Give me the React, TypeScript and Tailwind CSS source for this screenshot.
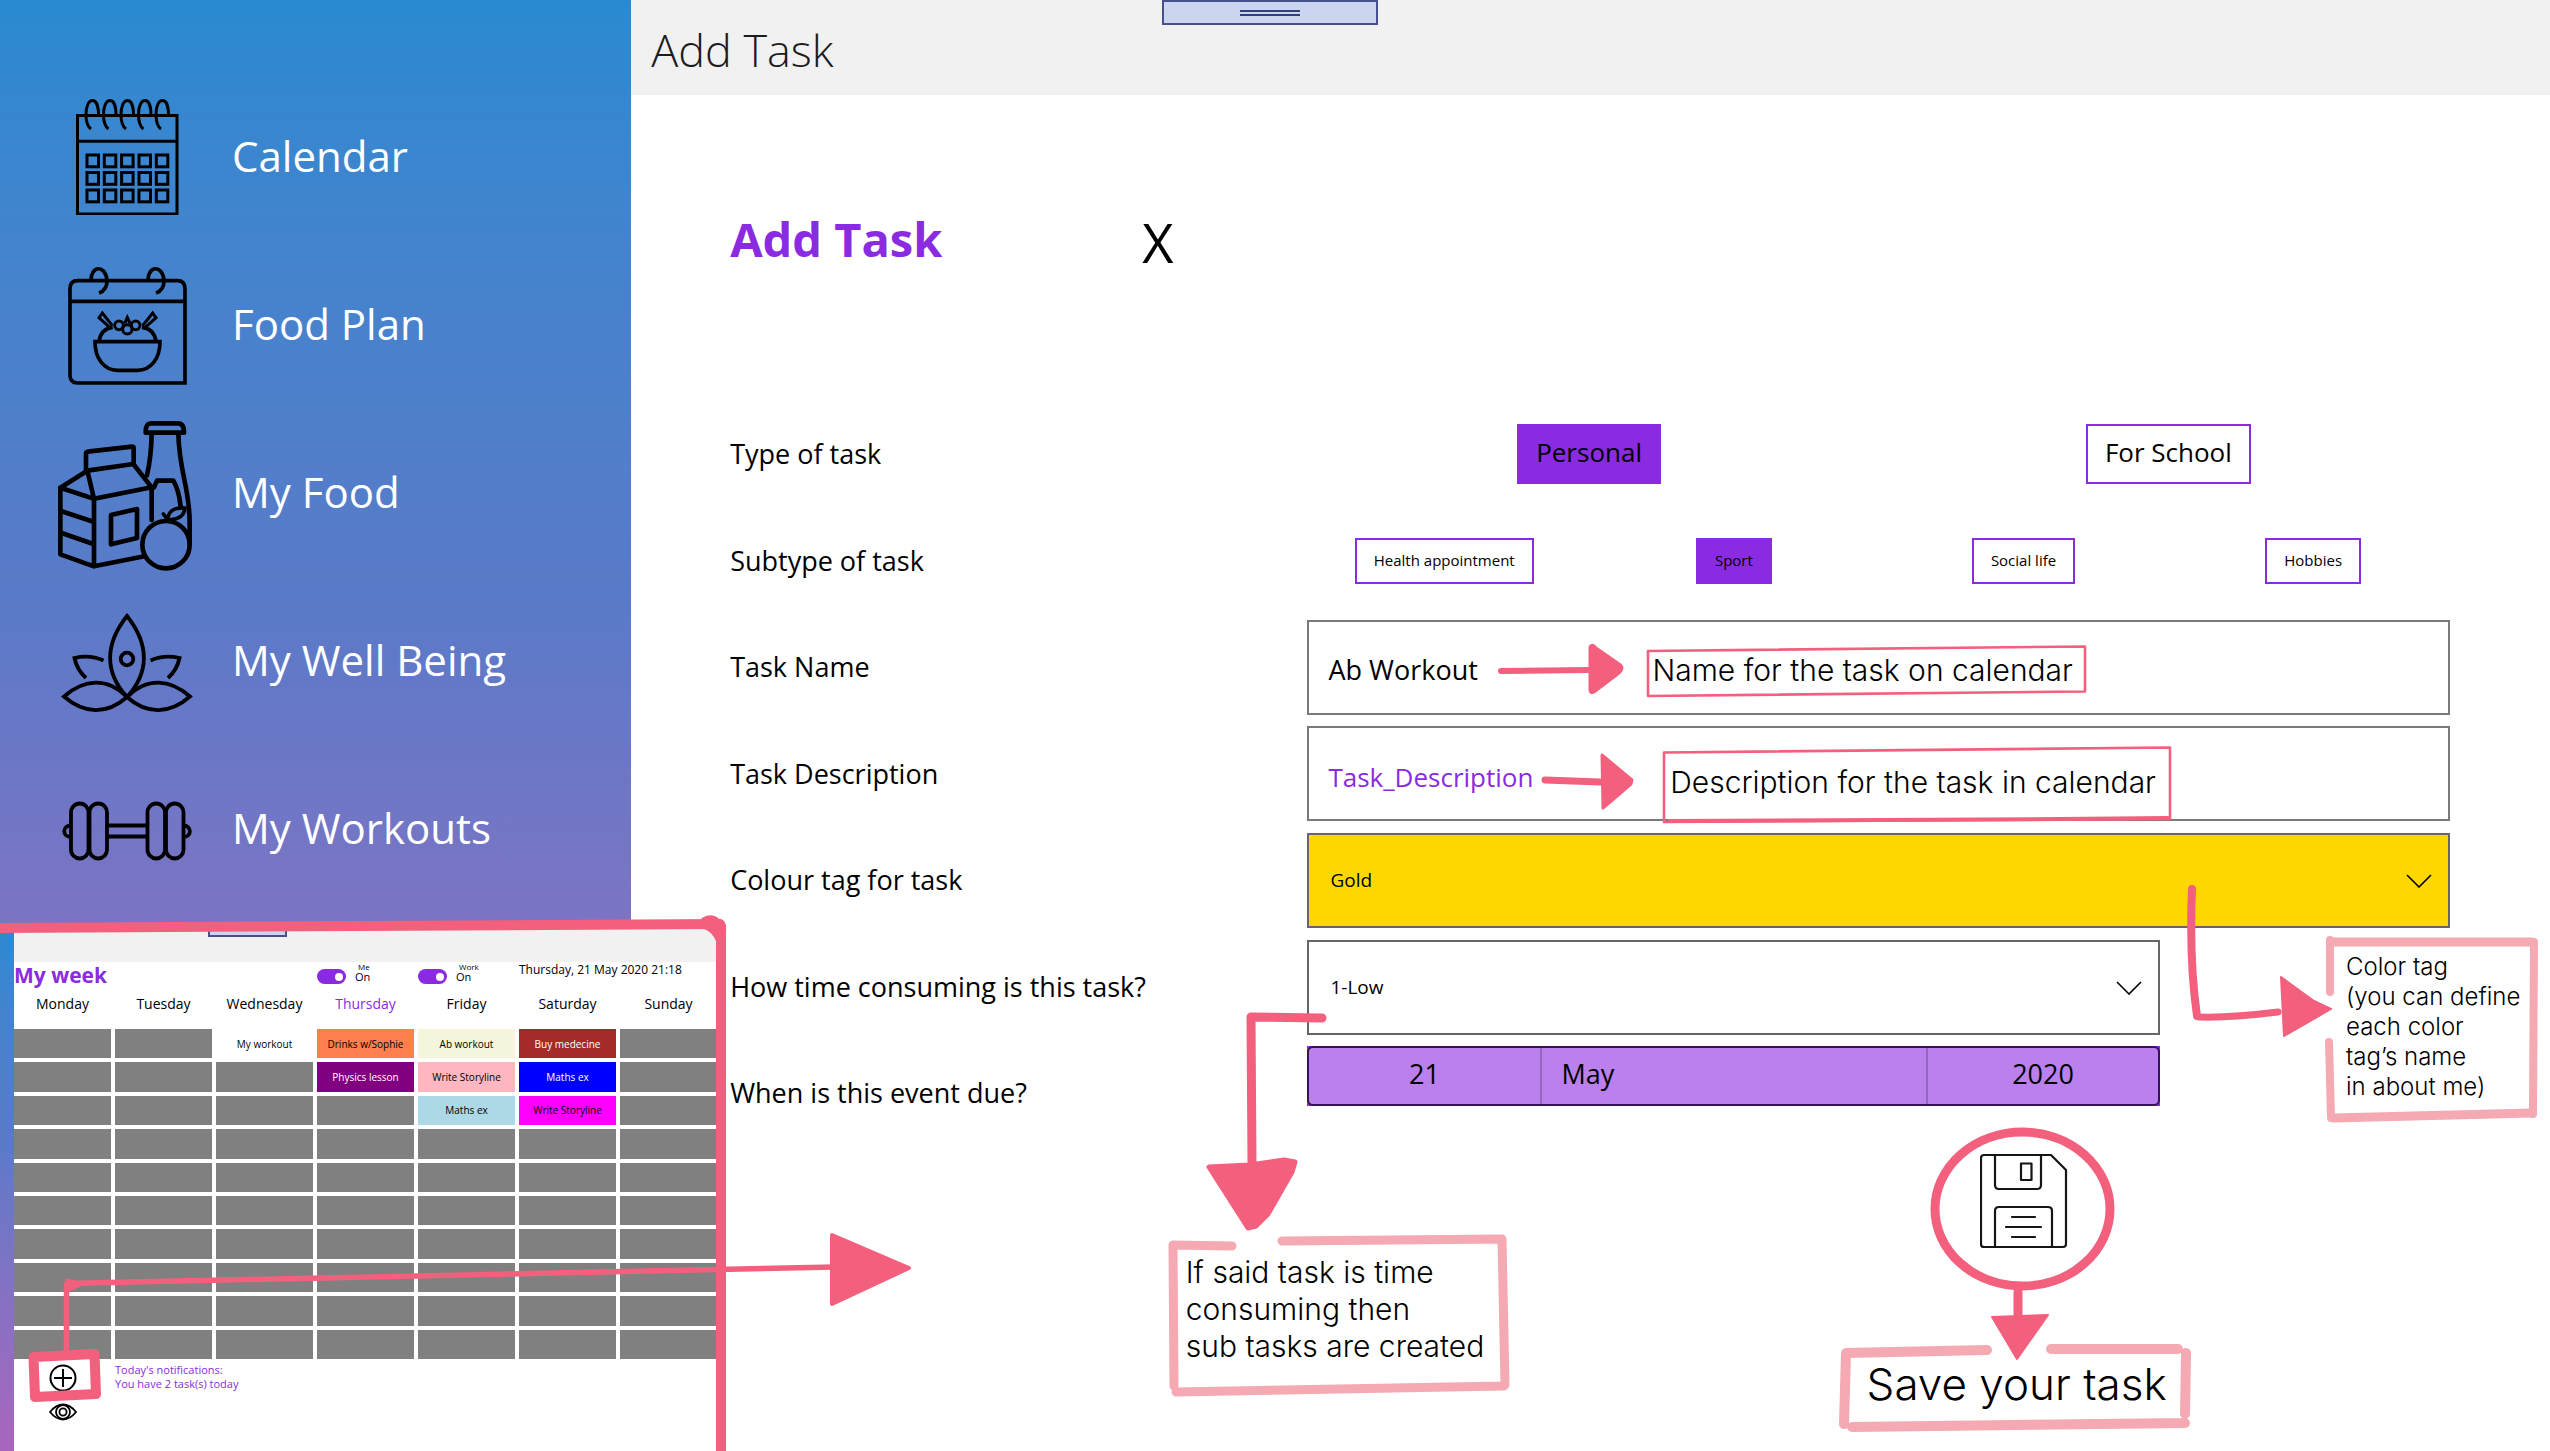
import React, { useState } from "react";

const icon = "w-[150px] shrink-0 fill-none stroke-black";

function CalendarIcon() {
  return (
    <svg viewBox="50 95 150 120" className={icon} strokeWidth="3" aria-hidden="true">
      <path d="M77.500 115.500H177V214H77.500ZM77.500 141.300H177" />
      {[92, 109.500, 127, 144.500, 162].map((x) => (
        <path key={x} d={`M${x + 6.500} 115c0-8-2-14.500-6-14.500s-6.500 6-6.500 14 1.500 12 5 14.500`} />
      ))}
      {[155, 172.500, 190].map((y) =>
        [87, 104.300, 121.600, 139, 156.300].map((x) => <rect key={`${x}-${y}`} x={x} y={y} width="11.500" height="11.800" />)
      )}
    </svg>
  );
}

function FoodPlanIcon() {
  return (
    <svg viewBox="0 0 450 378" className={icon} strokeWidth="11" aria-hidden="true">
      <path d="M83 62H382Q405 62 405 86V369H83Q60 369 60 346V86Q60 62 83 62ZM60 124H405" />
      <path d="M123 60C123 18 165 12 171 60Q172 90 147 99M294 60C294 18 336 12 342 60Q343 90 318 99" />
      <path d="M135 245H330C330 296 302 331 263 331H202C163 331 135 296 135 245Z" />
      <path d="M147 245C150 220 163 205 188 202M318 245C315 220 302 205 276 202" />
      <g strokeWidth="9">
        <path d="M178 201L147 173L157 159L187 197M287 201L318 173L308 159L278 197" />
        <circle cx="207" cy="196" r="13" />
        <circle cx="257" cy="196" r="13" />
        <circle cx="232" cy="208" r="14" />
        <path d="M224 190L232 172L240 190" />
      </g>
    </svg>
  );
}

function FoodIcon() {
  return (
    <svg viewBox="0 450 450 486" className={icon} strokeWidth="14" strokeLinejoin="round" strokeLinecap="round" aria-hidden="true">
      <path d="M31 683L132 716V919L31 883ZM132 716L305 682V780M132 919L283 889M31 683L112 632L132 716M112 632L250 612L305 682" />
      <path d="M108 632V580Q108 576 113 575L246 560Q251 560 251 565V612M35 754L130 785M35 819L130 852" />
      <path d="M183 765L261 747V834L183 853Z" />
      <path d="M287 518C287 500 290 490 303 490H385C398 490 402 500 402 518ZM305 522C304 572 298 615 291 646M385 522C388 640 419 680 419 790V850" />
      <path d="M312 682L321 662H370C384 686 389 710 392 740" />
      <circle cx="348" cy="854" r="71" />
      <path d="M340 762L352 778C356 752 372 742 405 744C402 770 380 782 352 778" strokeWidth="11" />
    </svg>
  );
}

function LotusIcon() {
  return (
    <svg viewBox="50 600 150 120" className={icon} strokeWidth="3.800" aria-hidden="true">
      <path d="M127 617C104 646 105 674 127 698C149 674 150 646 127 617Z" />
      <circle cx="127" cy="660" r="6.300" />
      <path d="M127 698C107 678 84 680 64 697.500C84 715 107 716 127 698C147 678 170 680 190 697.500C170 715 147 716 127 698Z" />
      <path d="M103.500 661.500Q90 655.500 74.500 659Q77 671 86 679M150.500 661.500Q164 655.500 179.500 659Q177 671 168 679" />
    </svg>
  );
}

function DumbbellIcon() {
  return (
    <svg viewBox="50 768 150 120" className={icon} strokeWidth="3.800" aria-hidden="true">
      <rect x="71" y="804.500" width="17.500" height="55" rx="8.700" />
      <rect x="89.500" y="804.500" width="17.500" height="55" rx="8.700" />
      <rect x="147.500" y="804.500" width="17.500" height="55" rx="8.700" />
      <rect x="166" y="804.500" width="17.500" height="55" rx="8.700" />
      <path d="M107 826.500H147.500M107 837.500H147.500M71 826.500C62 826.500 62 838 71 838M183.500 826.500C192 826.500 192 838 183.500 838" />
    </svg>
  );
}

const NAV = [
  { label: "Calendar", Icon: CalendarIcon },
  { label: "Food Plan", Icon: FoodPlanIcon },
  { label: "My Food", Icon: FoodIcon },
  { label: "My Well Being", Icon: LotusIcon },
  { label: "My Workouts", Icon: DumbbellIcon },
];

function Sidebar() {
  return (
    <nav className="w-[24.75%] shrink-0 bg-linear-to-b from-[#298ad1] via-[#5a7ac8] via-42% to-[#a865bd] pt-[71px]">
      {NAV.map(({ label, Icon }) => (
        <a key={label} href="#" className="flex h-[168px] items-center gap-[32px] pl-[50px] text-[42px] text-white">
          <Icon />
          <span className="whitespace-nowrap">{label}</span>
        </a>
      ))}
    </nav>
  );
}

function DebugTab() {
  return (
    <div className="absolute left-[531px] top-0 flex h-[25px] w-[216px] flex-col items-center justify-center gap-[2px] border-2 border-[#46508a] bg-[#ccd5ef]">
      <span className="h-[2px] w-[60px] bg-[#333f78]" />
      <span className="h-[2px] w-[60px] bg-[#333f78]" />
    </div>
  );
}

function Chevron() {
  return (
    <svg viewBox="0 0 26 14" className="pointer-events-none absolute right-[18px] top-[41px] w-[26px] fill-none stroke-black" strokeWidth="1.600" aria-hidden="true">
      <path d="M1 1L13 13L25 1" />
    </svg>
  );
}

const label = "text-[27px] text-black whitespace-nowrap";
const field = "h-[95px] w-full appearance-none rounded-none border-2 outline-none";

function Choice({ text, active, onClick, small }: { text: string; active: boolean; onClick: () => void; small?: boolean }) {
  return (
    <button
      type="button"
      aria-pressed={active}
      onClick={onClick}
      className={`justify-self-center whitespace-nowrap border-2 border-[#8a2be2] text-black ${
        small ? "h-[46px] px-[17px] pb-[2px] text-[15px]" : "h-[60px] px-[17px] pb-[3px] text-[26px]"
      } ${active ? "bg-[#8a2be2]" : "bg-white"}`}
    >
      {text}
    </button>
  );
}

function TaskForm() {
  const [type, setType] = useState("Personal");
  const [sub, setSub] = useState("Sport");
  return (
    <form className="pl-[99px] pr-[92px]">
      <div className="flex h-[306px] items-start pt-[112px]">
        <h2 className="w-[412px] text-[47px] font-bold leading-[64px] text-[#8a2be2]">Add Task</h2>
        <button type="button" aria-label="Close" className="text-[54px] leading-[70px] text-black">
          X
        </button>
      </div>
      <div className="grid h-[746px] grid-cols-[569fr_1158fr] grid-rows-7 items-center">
        <span className={label}>Type of task</span>
        <div className="grid grid-cols-2 items-center">
          {["Personal", "For School"].map((t) => (
            <Choice key={t} text={t} active={type === t} onClick={() => setType(t)} />
          ))}
        </div>
        <span className={label}>Subtype of task</span>
        <div className="grid grid-cols-4 items-center">
          {["Health appointment", "Sport", "Social life", "Hobbies"].map((t) => (
            <Choice key={t} small text={t} active={sub === t} onClick={() => setSub(t)} />
          ))}
        </div>
        <label htmlFor="name" className={label}>Task Name</label>
        <div className="px-[8px]">
          <input id="name" defaultValue="Ab Workout" className={`${field} border-[#7a7a7a] pl-[19px] pt-[4px] text-[27px] text-black`} />
        </div>
        <label htmlFor="description" className={label}>Task Description</label>
        <div className="px-[8px]">
          <input id="description" placeholder="Task_Description" className={`${field} border-[#7a7a7a] pl-[19px] pt-[6px] text-[26px] placeholder:text-[#8a2be2]`} />
        </div>
        <label htmlFor="colour" className={label}>Colour tag for task</label>
        <div className="relative mx-[8px]">
          <select id="colour" className={`${field} border-[#666666] bg-[#ffd700] pl-[21px] text-[19px] text-black`}>
            <option>Gold</option>
          </select>
          <Chevron />
        </div>
        <label htmlFor="effort" className={label}>How time consuming is this task?</label>
        <div className="relative ml-[8px] w-[73.6%]">
          <select id="effort" className={`${field} border-[#666666] bg-white pl-[21px] text-[19px] text-black`}>
            <option>1-Low</option>
          </select>
          <Chevron />
        </div>
        <span className={label}>When is this event due?</span>
        <div className="mb-[35px] ml-[8px] w-[73.6%] bg-[#8a2be2]">
          <div className="grid h-[60px] grid-cols-[231fr_390fr_231fr] rounded-[6px] border-2 border-[#37125a] bg-[#b980ee] text-[27px] text-black">
            <select aria-label="Day" className="appearance-none pb-[3px] text-center outline-none">
              <option>21</option>
            </select>
            <select aria-label="Month" className="appearance-none border-x-2 border-[#9466be] pb-[3px] pl-[20px] outline-none">
              <option>May</option>
            </select>
            <select aria-label="Year" className="appearance-none pb-[3px] text-center outline-none">
              <option>2020</option>
            </select>
          </div>
        </div>
      </div>
      <div className="grid grid-cols-[569fr_1158fr]">
        <div className="col-start-2 grid grid-cols-4 pt-[6px]">
          <button type="submit" aria-label="Save" className="col-start-3 justify-self-center">
            <svg viewBox="0 0 88 96" className="w-[88px] fill-none stroke-[#151515]" strokeWidth="2.2" strokeLinejoin="round" strokeLinecap="round" aria-hidden="true">
              <path d="M4 2H71L86 17V91Q86 94 83 94H4Q1 94 1 91V5Q1 2 4 2Z" />
              <path d="M15 2V32Q15 36 19 36H57Q61 36 61 32V2M41 10.500H51.500V27H41ZM15 94V58Q15 54 19 54H68Q72 54 72 58V94M32 64H55M26 74H61M32 84H55" />
            </svg>
          </button>
        </div>
      </div>
    </form>
  );
}

const DAYS = ["Monday", "Tuesday", "Wednesday", "Thursday", "Friday", "Saturday", "Sunday"];
const EVENTS: Record<string, [string, string]> = {
  "0-2": ["My workout", "bg-white text-black"],
  "0-3": ["Drinks w/Sophie", "bg-[#ff7f50] text-black"],
  "0-4": ["Ab workout", "bg-[#f5f5dc] text-black"],
  "0-5": ["Buy medecine", "bg-[#a52a2a] text-white"],
  "1-3": ["Physics lesson", "bg-[#800080] text-white"],
  "1-4": ["Write Storyline", "bg-[#ffb6c1] text-black"],
  "1-5": ["Maths ex", "bg-[#0000ff] text-white"],
  "2-4": ["Maths ex", "bg-[#add8e6] text-black"],
  "2-5": ["Write Storyline", "bg-[#ff00ff] text-black"],
};

function Toggle({ text }: { text: string }) {
  return (
    <label className="flex items-start gap-[9px]">
      <input type="checkbox" defaultChecked className="peer sr-only" />
      <span className="mt-[7px] flex h-[15px] w-[29px] items-center justify-end rounded-full bg-[#8a2be2] pr-[3px]">
        <span className="h-[8px] w-[8px] rounded-full bg-white" />
      </span>
      <span className="flex flex-col text-[11px] leading-[12px] text-black">
        <span className="pl-[3px] text-[8px] leading-[9px]">{text}</span>
        <span>On</span>
      </span>
    </label>
  );
}

function WeekPanel() {
  return (
    <section className="absolute bottom-0 left-0 flex h-[528px] w-[725px] overflow-hidden bg-white">
      <div className="w-[14px] shrink-0 bg-linear-to-b from-[#298ad1] via-[#5a7ac8] via-42% to-[#a865bd]" />
      <div className="flex flex-1 flex-col">
        <div className="h-[39px] shrink-0 bg-[#f1f1f1] pl-[194px]">
          <div className="flex h-[14px] w-[79px] items-center justify-center border-2 border-t-0 border-[#46508a] bg-[#ccd5ef]">
            <span className="h-[3px] w-[22px] bg-[#6a6c96]" />
          </div>
        </div>
        <div className="grid w-[707px] shrink-0 grid-cols-7">
          <h3 className="col-span-3 text-[21px] font-bold leading-[26px] text-[#8a2be2]">My week</h3>
          <Toggle text="Me" />
          <Toggle text="Work" />
          <time className="col-span-2 whitespace-nowrap text-[12px] leading-[16px] text-black">Thursday, 21 May 2020 21:18</time>
        </div>
        <table className="-ml-[4px] h-[375px] w-[711px] table-fixed border-separate border-spacing-[4px]">
          <thead>
            <tr>
              {DAYS.map((d) => (
                <th key={d} className={`h-[33px] p-0 align-top text-[14px] font-normal leading-[24px] ${d === "Thursday" ? "text-[#8a2be2]" : "text-black"}`}>
                  {d}
                </th>
              ))}
            </tr>
          </thead>
          <tbody>
            {Array.from({ length: 10 }, (_, r) => (
              <tr key={r}>
                {DAYS.map((d, c) => {
                  const e = EVENTS[`${r}-${c}`];
                  return (
                    <td key={d} className={`h-[29px] whitespace-nowrap p-0 text-center text-[10px] leading-[14px] ${e ? e[1] : "bg-[#808080]"}`}>
                      {e?.[0]}
                    </td>
                  );
                })}
              </tr>
            ))}
          </tbody>
        </table>
        <div className="flex">
          <div className="flex w-[97px] shrink-0 flex-col items-center gap-[11px] pt-[1px]">
            <button type="button" aria-label="Add task">
              <svg viewBox="0 0 28 28" className="w-[28px] fill-none stroke-black" strokeWidth="2" aria-hidden="true">
                <circle cx="14" cy="14" r="12.500" />
                <path d="M14 5V23M5 14H23" />
              </svg>
            </button>
            <button type="button" aria-label="Show tasks">
              <svg viewBox="0 0 28 18" className="w-[28px] fill-none stroke-black" strokeWidth="1.800" aria-hidden="true">
                <path d="M1 9Q7 1.500 14 1.500T27 9Q21 16.500 14 16.500T1 9Z" />
                <circle cx="14" cy="9" r="7" />
                <circle cx="14" cy="9" r="3.600" />
              </svg>
            </button>
          </div>
          <p className="ml-[4px] text-[11px] leading-[14px] text-[#8a2be2]">
            Today's notifications:
            <br />
            You have 2 task(s) today
          </p>
        </div>
      </div>
    </section>
  );
}

/* Hand-drawn arrows and frames laid over the screens. */
function Strokes() {
  return (
    <svg viewBox="0 0 2550 1451" className="pointer-events-none absolute left-0 top-0 w-full fill-none" strokeLinecap="round" strokeLinejoin="round" aria-hidden="true">
      <g stroke="#f2607e" fill="none">
        <path d="M0 928Q360 926 720 924" strokeWidth="10" />
        <path d="M721 926V1451" strokeWidth="10" />
        <path d="M703 919Q712 914 718 920Q727 924 724 934L718 942Q714 930 703 927Z" fill="#f2607e" strokeWidth="3" />
        <path d="M66.500 1352V1284L86 1283L835 1267" strokeWidth="5.500" />
        <path d="M66 1279L86 1283L68 1292Z" fill="#f2607e" />
        <path d="M832 1235L909 1268L832 1304Z" fill="#f2607e" strokeWidth="4" />
        <path d="M33.500 1357L94.500 1354L96 1394L35 1397Z" strokeWidth="10" />
        <path d="M1501 671L1590 670" strokeWidth="6" />
        <path d="M1590 647Q1592 643 1596 648L1619 664Q1625 668 1619 673L1594 692Q1590 694 1590 690Z" fill="#f2607e" strokeWidth="3" />
        <path d="M1648 651L2085 646.500V691.500L1648 696Z" strokeWidth="2.600" />
        <path d="M1545 780L1600 782" strokeWidth="7" />
        <path d="M1602 755L1632 780L1631 784L1603 808Z" fill="#f2607e" strokeWidth="3" />
        <path d="M1664 752.500L2170 747.500V819L1664 822Z" strokeWidth="2.600" />
        <path d="M1670 821L2060 819L2168 818" strokeWidth="4" />
        <path d="M2192 889Q2189 960 2197 1016" strokeWidth="8" />
        <path d="M2199 1017Q2230 1018 2278 1012" strokeWidth="7" />
        <path d="M2281 977L2314 1001L2331 1009L2284 1036Z" fill="#f2607e" strokeWidth="2" />
        <path d="M1322 1018L1251 1017L1252 1165" strokeWidth="9" />
        <path d="M1209 1167L1250 1165L1284 1160L1295 1162L1292 1172L1268 1214L1256 1226L1248 1228Z" fill="#f2607e" strokeWidth="5" />
        <ellipse cx="2022.500" cy="1209" rx="87.500" ry="77" strokeWidth="9" />
        <path d="M2018 1292V1318" strokeWidth="9" />
        <path d="M1992 1317L2048 1315L2017 1359Z" fill="#f2607e" strokeWidth="2" />
      </g>
      <g stroke="#f5a9b3" fill="none">
        <path d="M1232 1246L1173 1245L1174 1386M1282 1241L1502 1239L1505 1385M1176 1392L1504 1386" strokeWidth="9" />
        <path d="M1987 1350L1846 1353L1844 1424M2051 1349L2178 1349M2186 1353L2185 1414M1852 1427L2185 1423" strokeWidth="10" />
        <path d="M2330 940V992M2329 1042L2331 1118M2534 942L2533 1114" strokeWidth="8" />
        <path d="M2333 942L2532 942M2333 1118L2532 1113" strokeWidth="9" />
      </g>
    </svg>
  );
}

const note = "absolute whitespace-nowrap font-['Inter'] font-light text-black";

function Notes() {
  return (
    <>
      <p className={`${note} left-[64.800%] top-[650px] text-[30px] leading-[40px]`}>Name for the task on calendar</p>
      <p className={`${note} left-[65.500%] top-[762px] text-[30px] leading-[40px]`}>Description for the task in calendar</p>
      <p className={`${note} left-[92%] top-[952px] text-[24px] leading-[30px]`}>
        Color tag
        <br />
        (you can define
        <br />
        each color
        <br />
        tag’s name
        <br />
        in about me)
      </p>
      <p className={`${note} left-[46.500%] top-[1254px] text-[30px] leading-[37px]`}>
        If said task is time
        <br />
        consuming then
        <br />
        sub tasks are created
      </p>
      <p className={`${note} left-[73.200%] top-[1354px] text-[44px] leading-[60px]`}>Save your task</p>
    </>
  );
}

export default function App() {
  return (
    <div className="relative flex min-h-screen overflow-hidden bg-white font-['Open_Sans',sans-serif]">
      <Sidebar />
      <main className="min-w-0 flex-1">
        <header className="relative h-[95px] bg-[#f1f1f1] pl-[20px]">
          <h1 className="pt-[18px] text-[45px] font-light leading-[64px] text-[#1c1c1c]">Add Task</h1>
          <DebugTab />
        </header>
        <TaskForm />
      </main>
      <WeekPanel />
      <Strokes />
      <Notes />
    </div>
  );
}
